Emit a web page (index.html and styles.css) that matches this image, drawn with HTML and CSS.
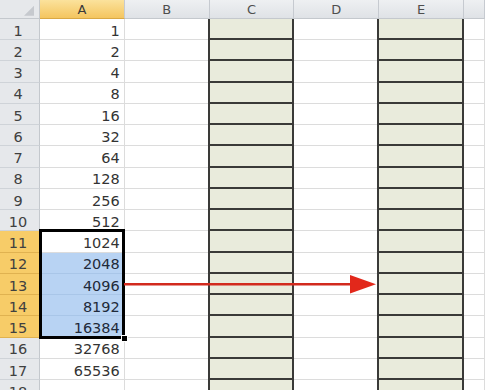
FILE: index.html
```html
<!DOCTYPE html>
<html>
<head>
<meta charset="utf-8">
<link rel="stylesheet" href="styles.css">
</head>
<body>
<div class="sheet">
  <div class="grid">
    <div class="corner"></div>
    <div class="colhead on">A</div>
    <div class="colhead">B</div>
    <div class="colhead">C</div>
    <div class="colhead">D</div>
    <div class="colhead">E</div>
    <div class="colhead"></div>

    <div class="rowhead">1</div><div class="cell num">1</div><div class="cell"></div><div class="cell fill"></div><div class="cell"></div><div class="cell fill"></div><div class="cell"></div>
    <div class="rowhead">2</div><div class="cell num">2</div><div class="cell"></div><div class="cell fill"></div><div class="cell"></div><div class="cell fill"></div><div class="cell"></div>
    <div class="rowhead">3</div><div class="cell num">4</div><div class="cell"></div><div class="cell fill"></div><div class="cell"></div><div class="cell fill"></div><div class="cell"></div>
    <div class="rowhead">4</div><div class="cell num">8</div><div class="cell"></div><div class="cell fill"></div><div class="cell"></div><div class="cell fill"></div><div class="cell"></div>
    <div class="rowhead">5</div><div class="cell num">16</div><div class="cell"></div><div class="cell fill"></div><div class="cell"></div><div class="cell fill"></div><div class="cell"></div>
    <div class="rowhead">6</div><div class="cell num">32</div><div class="cell"></div><div class="cell fill"></div><div class="cell"></div><div class="cell fill"></div><div class="cell"></div>
    <div class="rowhead">7</div><div class="cell num">64</div><div class="cell"></div><div class="cell fill"></div><div class="cell"></div><div class="cell fill"></div><div class="cell"></div>
    <div class="rowhead">8</div><div class="cell num">128</div><div class="cell"></div><div class="cell fill"></div><div class="cell"></div><div class="cell fill"></div><div class="cell"></div>
    <div class="rowhead">9</div><div class="cell num">256</div><div class="cell"></div><div class="cell fill"></div><div class="cell"></div><div class="cell fill"></div><div class="cell"></div>
    <div class="rowhead">10</div><div class="cell num">512</div><div class="cell"></div><div class="cell fill"></div><div class="cell"></div><div class="cell fill"></div><div class="cell"></div>
    <div class="rowhead on">11</div><div class="cell num">1024</div><div class="cell"></div><div class="cell fill"></div><div class="cell"></div><div class="cell fill"></div><div class="cell"></div>
    <div class="rowhead on">12</div><div class="cell num sel">2048</div><div class="cell"></div><div class="cell fill"></div><div class="cell"></div><div class="cell fill"></div><div class="cell"></div>
    <div class="rowhead on">13</div><div class="cell num sel">4096</div><div class="cell"></div><div class="cell fill"></div><div class="cell"></div><div class="cell fill"></div><div class="cell"></div>
    <div class="rowhead on">14</div><div class="cell num sel">8192</div><div class="cell"></div><div class="cell fill"></div><div class="cell"></div><div class="cell fill"></div><div class="cell"></div>
    <div class="rowhead on">15</div><div class="cell num sel">16384</div><div class="cell"></div><div class="cell fill"></div><div class="cell"></div><div class="cell fill"></div><div class="cell"></div>
    <div class="rowhead">16</div><div class="cell num">32768</div><div class="cell"></div><div class="cell fill"></div><div class="cell"></div><div class="cell fill"></div><div class="cell"></div>
    <div class="rowhead">17</div><div class="cell num">65536</div><div class="cell"></div><div class="cell fill"></div><div class="cell"></div><div class="cell fill"></div><div class="cell"></div>
    <div class="rowhead">18</div><div class="cell num"></div><div class="cell"></div><div class="cell fill"></div><div class="cell"></div><div class="cell fill"></div><div class="cell"></div>

    <div class="selection"><span class="handle"></span></div>
  </div>
  <svg class="arrow" width="254" height="21" viewBox="0 0 254 21">
    <line x1="0" y1="10.3" x2="230" y2="10.3" stroke="#d22a1e" stroke-width="2.6"/>
    <polygon points="226,1 252,10.3 226,19.6" fill="#e2281b"/>
  </svg>
</div>
</body>
</html>
```
FILE: styles.css
```css
* {
  box-sizing: border-box;
}

html, body {
  margin: 0;
  padding: 0;
  background: #ffffff;
  overflow: hidden;
}

.sheet {
  position: relative;
  width: 485px;
  height: 390px;
  overflow: hidden;
  font-family: "DejaVu Sans", sans-serif;
  font-size: 14.5px;
  color: #333333;
}

.grid {
  position: relative;
  display: grid;
  grid-template-columns: 40px repeat(5, 84.8px) 1fr;
  grid-template-rows: 18.75px repeat(18, 21.25px);
}

.corner {
  position: relative;
  background: #e6e8eb;
  border-right: 1px solid #c4c8cd;
  border-bottom: 1px solid #c4c8cd;
}

.corner::after {
  content: "";
  position: absolute;
  right: 5px;
  bottom: 2px;
  width: 10px;
  height: 10px;
  background: #c6c9ce;
  clip-path: polygon(100% 0, 100% 100%, 0 100%);
}

.colhead {
  display: flex;
  align-items: center;
  justify-content: center;
  padding-top: 2px;
  line-height: 1;
  font-size: 13px;
  color: #4e4e4e;
  background: linear-gradient(#eef0f2, #dfe2e6);
  border-right: 1px solid #c6cad0;
  border-bottom: 1px solid #c4c8cd;
}

.colhead.on {
  background: linear-gradient(#fbe29c, #f4c55f);
  border-bottom-color: #d9a844;
  color: #3a3a3a;
}

.rowhead {
  display: flex;
  align-items: flex-end;
  justify-content: center;
  padding: 0 3px 1px 0;
  line-height: 1;
  color: #404040;
  background: #e6e8eb;
  border-right: 1px solid #c4c8cd;
  border-bottom: 1px solid #cfd3d8;
}

.rowhead.on {
  background: #f7cc68;
  border-bottom-color: #e0b250;
}

.cell {
  border-right: 1px solid #dcdcdc;
  border-bottom: 1px solid #dcdcdc;
}

.num {
  display: flex;
  align-items: flex-end;
  justify-content: flex-end;
  padding: 0 4px 1px 0;
  line-height: 1;
}

.sel {
  background: #b8d3f3;
  border-bottom-color: #a9c6e8;
  color: #1f2a3a;
}

.fill {
  background: #e9ebdc;
  border-right: 2px solid #3a3a38;
  border-bottom: 2px solid #3a3a38;
  box-shadow: -2px 0 0 #3a3a38;
}

.selection {
  position: absolute;
  grid-column: 2 / 3;
  grid-row: 12 / 17;
  top: -2.5px;
  left: -1px;
  right: 0;
  bottom: -1px;
  border: 3px solid #000000;
}

.handle {
  position: absolute;
  right: -6px;
  bottom: -6px;
  width: 7px;
  height: 7px;
  background: #000000;
  border: 1px solid #ffffff;
}

.arrow {
  position: absolute;
  left: 124px;
  top: 274px;
}
```
